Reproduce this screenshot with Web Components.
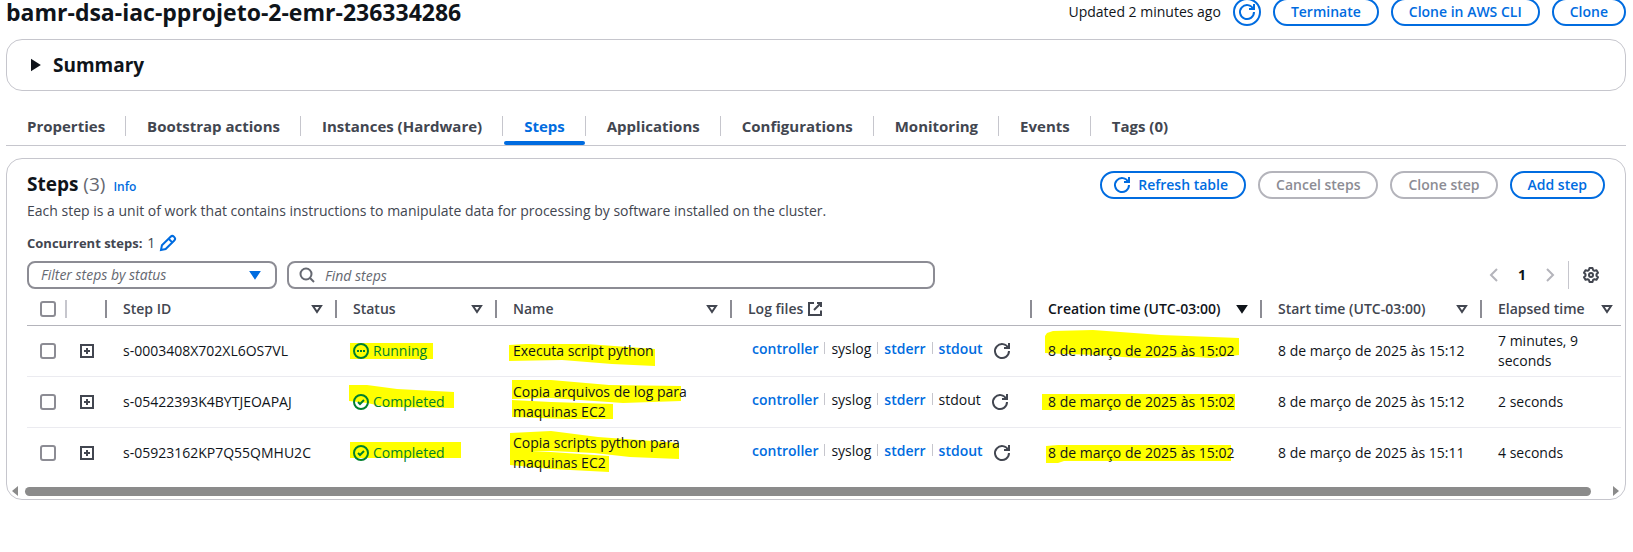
<!DOCTYPE html>
<html lang="en">
<head>
<meta charset="utf-8">
<title>EMR cluster steps</title>
<style>
  body { margin: 0; background: #fff; color: #0f141a; font: 14px/20px "Open Sans", "Noto Sans", sans-serif; }
</style>
</head>
<body>
<cluster-page></cluster-page>

<script>
const ICONS = {
  refresh: '<path d="M10 5h5V0"/><path d="M15 8a7 7 0 1 1-.7-3"/>',
  edit: '<path d="m1 15 .93-4.65 8.65-8.66a2.35 2.35 0 0 1 3.32 0l.41.41a2.36 2.36 0 0 1 0 3.33l-8.66 8.65z"/><path d="m8.6 3.7 3.7 3.7"/>',
  search: '<circle cx="7" cy="7" r="5.5"/><path d="m15 15-4-4"/>',
  caret: '<path d="M4 5h8l-4 6z"/>',
  'caret-filled': '<path d="M4 5h8l-4 6z" fill="currentColor"/>',
  'caret-right': '<path d="M5 3.5v9L12 8z" fill="currentColor"/>',
  previous: '<path d="m11 2-6 6 6 6"/>',
  next: '<path d="m5 2 6 6-6 6"/>',
  external: '<path d="M10 2h4v4"/><path d="m7 9 7-7"/><path d="M14 9.5V14H2V2h5"/>',
  expand: '<path d="M2 2h12v12H2z"/><path d="M8 5v6M5 8h6"/>',
  running: '<circle cx="8" cy="8" r="7"/><path d="M4 8h2M7 8h2M10 8h2"/>',
  completed: '<circle cx="8" cy="8" r="7"/><path d="m5 8 2 2 4-4"/>',
  settings: '<path stroke-linejoin="round" d="M6.500 1h3l.6 2.100 1.300.700 2.100-.600 1.500 2.600-1.500 1.500v1.400l1.500 1.500-1.500 2.600-2.100-.600-1.300.700-.600 2.100h-3l-.600-2.100-1.300-.700-2.100.600L1 10.200l1.500-1.500V7.300L1 5.800l1.500-2.600 2.100.600 1.300-.700z"/><circle cx="8" cy="8" r="2"/>'
};

function define(name, css, html) {
  const template = document.createElement('template');
  template.innerHTML = `<style>*{box-sizing:border-box}${css}</style>${html || ''}`;
  customElements.define(name, class extends HTMLElement {
    constructor() {
      super();
      this.attachShadow({ mode: 'open' }).append(template.content.cloneNode(true));
    }
  });
}

customElements.define('ui-icon', class extends HTMLElement {
  connectedCallback() {
    if (this.shadowRoot) return;
    this.attachShadow({ mode: 'open' }).innerHTML = `
      <style>
        :host { display: inline-block; width: 16px; height: 16px; flex: none; }
        svg { display: block; width: 100%; height: 100%; overflow: visible; fill: none; stroke: currentColor; stroke-width: 2; }
      </style>
      <svg viewBox="0 0 16 16" aria-hidden="true">${ICONS[this.getAttribute('name')]}</svg>`;
  }
});

/* Highlighter stroke painted behind a table cell's text. */
customElements.define('marker-stroke', class extends HTMLElement {
  connectedCallback() {
    if (this.shadowRoot) return;
    this.attachShadow({ mode: 'open' }).innerHTML = `
      <style>
        :host { display: block; position: absolute; inset: 0; }
        svg { display: block; width: 100%; height: 100%; overflow: visible; fill: #ff0; }
      </style>
      <svg aria-hidden="true">${this.getAttribute('shapes').split('|').map(p => `<polygon points="${p}"/>`).join('')}</svg>`;
  }
});

customElements.define('ui-button', class extends HTMLElement {
  connectedCallback() {
    if (this.shadowRoot) return;
    const icon = this.getAttribute('icon');
    const off = this.hasAttribute('disabled') ? 'disabled' : '';
    const round = this.hasAttribute('round');
    this.attachShadow({ mode: 'open' }).innerHTML = `
      <style>
        :host { display: block; flex: none; }
        button { display: flex; align-items: center; justify-content: center; gap: 8px; box-sizing: border-box; height: 28px; margin: 0; padding: 0 ${icon ? '16px 0 12px' : '16px'}; border: 2px solid #006ce0; border-radius: 14px; background: #fff; color: #006ce0; font: 600 14px/20px "Open Sans", sans-serif; white-space: nowrap; }
        button:disabled { border-color: #b4b4bb; color: #8c8c94; }
        button.round { width: 28px; padding: 0; }
      </style>
      <button type="button" class="${round ? 'round' : ''}" ${round ? 'aria-label="Refresh"' : ''} ${off}>${icon ? `<ui-icon name="${icon}"></ui-icon>` : ''}<slot></slot></button>`;
    if (round) this.shadowRoot.querySelector('slot').remove();
  }
});

define('page-header', `
  :host { display: flex; justify-content: space-between; height: 28px; margin-top: -2px; }
  h1 { margin: 0; font-size: 23px; line-height: 28px; font-weight: 700; white-space: nowrap; }
  div { display: flex; align-items: center; gap: 12px; }
`, `
  <h1>bamr-dsa-iac-pprojeto-2-emr-236334286</h1>
  <div>
    <span>Updated 2 minutes ago</span>
    <ui-button icon="refresh" round></ui-button>
    <ui-button>Terminate</ui-button>
    <ui-button>Clone in AWS CLI</ui-button>
    <ui-button>Clone</ui-button>
  </div>`);

define('summary-panel', `
  :host { display: block; margin-top: 13px; border: 1px solid #c6c6cd; border-radius: 16px; }
  button { display: flex; align-items: center; gap: 10px; width: 100%; padding: 12px 20px; border: 0; background: none; color: inherit; font: 700 19px/26px "Open Sans", sans-serif; }
`, `<button type="button" aria-expanded="false"><ui-icon name="caret-right"></ui-icon>Summary</button>`);

define('cluster-tabs', `
  :host { display: block; margin-top: 20px; border-bottom: 1px solid #c6c6cd; }
  ul { display: flex; margin: 0; padding: 0 0 0 1px; list-style: none; }
  li { display: flex; align-items: flex-start; height: 34px; }
  li + li::before { content: ""; width: 1px; height: 20px; margin: 5px 1px 0 0; background: #c6c6cd; }
  a { height: 34px; padding: 5px 20px 0; color: #424650; font-size: 15px; font-weight: 700; text-decoration: none; white-space: nowrap; }
  a[aria-current] { color: #006ce0; position: relative; }
  a[aria-current]::after { content: ""; position: absolute; inset: auto 0 0; height: 4px; border-radius: 2px; background: #006ce0; }
`, `
  <nav><ul>
    <li><a href="#properties">Properties</a></li>
    <li><a href="#bootstrap">Bootstrap actions</a></li>
    <li><a href="#instances">Instances (Hardware)</a></li>
    <li><a href="#steps" aria-current="page">Steps</a></li>
    <li><a href="#applications">Applications</a></li>
    <li><a href="#configurations">Configurations</a></li>
    <li><a href="#monitoring">Monitoring</a></li>
    <li><a href="#events">Events</a></li>
    <li><a href="#tags">Tags (0)</a></li>
  </ul></nav>`);

define('steps-header', `
  :host { display: block; padding: 12px 20px 0; }
  .top { display: flex; justify-content: space-between; }
  .title { display: flex; align-items: baseline; gap: 8px; height: 28px; }
  h2 { margin: 0; font-size: 19px; line-height: 26px; font-weight: 700; }
  h2 span { color: #656871; font-weight: 400; }
  a { color: #006ce0; font-size: 12px; font-weight: 600; text-decoration: none; }
  .actions { display: flex; gap: 12px; }
  p { margin: 0; padding-top: 2px; color: #424650; }
  .concurrent { display: flex; align-items: center; gap: 5px; padding-top: 12px; color: #424650; }
  b { font-size: 13px; font-weight: 700; }
  .concurrent button { display: flex; margin: 0; padding: 0; border: 0; background: none; color: #006ce0; }
`, `
  <div class="top">
    <div class="title"><h2>Steps <span>(3)</span></h2><a href="#info">Info</a></div>
    <div class="actions">
      <ui-button icon="refresh">Refresh table</ui-button>
      <ui-button disabled>Cancel steps</ui-button>
      <ui-button disabled>Clone step</ui-button>
      <ui-button>Add step</ui-button>
    </div>
  </div>
  <p>Each step is a unit of work that contains instructions to manipulate data for processing by software installed on the cluster.</p>
  <div class="concurrent"><b>Concurrent steps:</b><span>1</span><button type="button" aria-label="Edit concurrent steps"><ui-icon name="edit"></ui-icon></button></div>`);

define('steps-filter', `
  :host { display: flex; align-items: center; gap: 10px; padding: 8px 20px 0; color: #424650; }
  .field { position: relative; flex: 0 1 250px; height: 28px; }
  .search { flex-basis: 648px; }
  select, input { width: 100%; height: 28px; margin: 0; border: 2px solid #8c8c94; border-radius: 8px; background: #fff; color: #656871; font: italic 14px/20px "Open Sans", sans-serif; }
  select { appearance: none; padding: 0 12px; }
  input { padding: 0 12px 0 36px; }
  input::placeholder { color: #656871; opacity: 1; }
  .field ui-icon { position: absolute; top: 6px; pointer-events: none; }
  .field .caret { right: 14px; color: #006ce0; }
  .field .glass { left: 12px; color: #656871; }
  .pages { display: flex; align-items: center; gap: 16px; margin-left: auto; }
  button { display: flex; margin: 0; padding: 0; border: 0; background: none; color: #424650; font: inherit; }
  button:disabled { color: #b4b4bb; }
  .pages b { color: #0f141a; }
  .gear { padding: 6px 6px 6px 14px; border-left: 1px solid #c6c6cd; }
`, `
  <div class="field"><select aria-label="Filter steps by status"><option>Filter steps by status</option></select><ui-icon class="caret" name="caret-filled"></ui-icon></div>
  <div class="field search"><ui-icon class="glass" name="search"></ui-icon><input type="search" placeholder="Find steps" aria-label="Find steps"></div>
  <div class="pages">
    <button type="button" disabled aria-label="Previous page"><ui-icon name="previous"></ui-icon></button>
    <b>1</b>
    <button type="button" disabled aria-label="Next page"><ui-icon name="next"></ui-icon></button>
  </div>
  <button class="gear" type="button" aria-label="Preferences"><ui-icon name="settings"></ui-icon></button>`);

const HEADS = ['Step ID', 'Status', 'Name', 'Log files', 'Creation time (UTC-03:00)', 'Start time (UTC-03:00)', 'Elapsed time'];
const STEPS = [
  {
    id: 's-0003408X702XL6OS7VL', status: 'Running', name: 'Executa script python', stdout: true,
    created: '8 de março de 2025 às 15:02', started: '8 de março de 2025 às 15:12', elapsed: '7 minutes, 9 seconds',
    marks: {
      status: '13,17 96,17 96,33 13,33',
      name: '12,19 29,18 90,18 158,23 158,40 115,38 65,34 12,35',
      created: '13,10 15,7 21,5 61,4 129,9 207,12 207,29 179,32 163,31 109,32 90,31 67,29 32,28 13,27'
    }
  },
  {
    id: 's-05422393K4BYTJEOAPAJ', status: 'Completed', name: 'Copia arquivos de log para maquinas EC2', stdout: false,
    created: '8 de março de 2025 às 15:02', started: '8 de março de 2025 às 15:12', elapsed: '2 seconds',
    marks: {
      status: '12,8 30,8 60,12 117,15 117,31 49,30 30,26 12,24',
      name: '15,3 54,3 112,8 184,9 184,24 126,26 54,21 15,22|15,23 54,25 116,27 116,42 69,42 15,40',
      created: '10,17 203,17 203,33 10,33'
    }
  },
  {
    id: 's-05923162KP7Q55QMHU2C', status: 'Completed', name: 'Copia scripts python para maquinas EC2', stdout: true,
    created: '8 de março de 2025 às 15:02', started: '8 de março de 2025 às 15:11', elapsed: '4 seconds',
    marks: {
      status: '13,14 124,14 124,30 13,30',
      name: '13,5 54,3 101,9 182,15 182,31 133,29 97,25 54,23 13,25|13,24 54,24 112,28 112,44 54,41 13,37',
      created: '14,18 26,17 199,17 199,33 32,33 26,35 14,35'
    }
  }
];

customElements.define('steps-table', class extends HTMLElement {
  connectedCallback() {
    if (this.shadowRoot) return;
    const head = HEADS.map((label, i) => label === 'Log files'
      ? `<th scope="col"><span>${label} <ui-icon name="external"></ui-icon></span></th>`
      : `<th scope="col" class="${i === 4 ? 'sorted' : ''}"><button type="button">${label}<ui-icon name="${i === 4 ? 'caret-filled' : 'caret'}"></ui-icon></button></th>`).join('');
    const marked = (shapes, html, cls) => `<td><marker-stroke shapes="${shapes}"></marker-stroke><div class="text ${cls || ''}">${html}</div></td>`;
    const rows = STEPS.map(s => `
      <tr>
        <td class="check"><input type="checkbox" aria-label="Select ${s.id}"></td>
        <td class="toggle"><button type="button" aria-label="Expand ${s.id}"><ui-icon name="expand"></ui-icon></button></td>
        <td>${s.id}</td>
        ${marked(s.marks.status, `<ui-icon name="${s.status.toLowerCase()}"></ui-icon>${s.status}`, 'status')}
        ${marked(s.marks.name, s.name)}
        <td class="logs"><div>
          <a href="#controller">controller</a><i></i><span>syslog</span><i></i><a href="#stderr">stderr</a><i></i>${s.stdout ? '<a href="#stdout">stdout</a>' : '<span>stdout</span>'}
          <button type="button" aria-label="Refresh logs"><ui-icon name="refresh"></ui-icon></button>
        </div></td>
        ${marked(s.marks.created, s.created)}
        <td>${s.started}</td>
        <td>${s.elapsed}</td>
      </tr>`).join('');
    this.attachShadow({ mode: 'open' }).innerHTML = `
      <style>
        * { box-sizing: border-box; }
        :host { display: block; margin-top: 4px; padding: 0 4px 0 20px; overflow: hidden; }
        table { width: 100%; table-layout: fixed; border-collapse: separate; border-spacing: 0; }
        .c-icon { width: 40px; } .c-time { width: 230px; } .c-start { width: 220px; } .c-status { width: 160px; } .c-name { width: 235px; } .c-logs { width: 300px; }
        th { position: relative; height: 33px; padding: 0 14px 1px 16px; border-bottom: 1px solid #b4b4bb; color: #424650; font-weight: 600; text-align: left; white-space: nowrap; }
        th:not(:last-child)::after { content: ""; position: absolute; right: 0; top: 7px; width: 2px; height: 18px; background: #8c8c94; }
        th:first-child::after { background: #c6c6cd; }
        th:last-child { padding-right: 8px; }
        th.check { padding: 0 0 1px 13px; }
        th.sorted { color: #0f141a; }
        th span { display: flex; align-items: center; gap: 4px; }
        button { margin: 0; padding: 0; border: 0; background: none; color: inherit; font: inherit; }
        th button { display: flex; align-items: center; justify-content: space-between; width: 100%; }
        th button ui-icon { margin-right: -2px; }
        td { position: relative; height: 51px; padding: 5px 16px; border-bottom: 1px solid #ebebf0; }
        tr:last-child td { border-bottom-color: transparent; }
        td.check { padding: 0 0 0 13px; }
        td.toggle { padding: 0 0 0 12px; color: #424650; }
        td.toggle button, td.toggle ui-icon, td.check input, th.check input { display: block; }
        .text { position: relative; }
        .status { display: flex; align-items: center; gap: 4px; color: #00802f; }
        .logs div { display: flex; align-items: flex-start; padding: 2px 0 0 4px; height: 28px; }
        .logs a { color: #006ce0; font-weight: 600; text-decoration: none; }
        .logs i { width: 1px; height: 12px; margin: 3px 6px 0; background: #c6c6cd; }
        .logs button { margin: 4px 0 0 11px; color: #424650; }
        .logs ui-icon { display: block; }
        input { appearance: none; width: 16px; height: 16px; margin: 0; border: 2px solid #8c8c94; border-radius: 3px; background: #fff; }
      </style>
      <table>
        <colgroup><col class="c-icon"><col class="c-icon"><col class="c-time"><col class="c-status"><col class="c-name"><col class="c-logs"><col class="c-time"><col class="c-start"><col></colgroup>
        <thead><tr><th class="check"><input type="checkbox" aria-label="Select all steps"></th><th></th>${head}</tr></thead>
        <tbody>${rows}</tbody>
      </table>`;
  }
});

define('scroll-track', `
  :host { display: flex; align-items: center; justify-content: space-between; gap: 7px; height: 16px; margin-top: 4px; padding: 0 6px 0 5px; }
  .left, .right { border: 5px solid transparent; border-width: 5px 0; }
  .left { border-right: 6px solid #8b8b8b; }
  .right { border-left: 6px solid #8b8b8b; }
  .thumb { flex: 1; height: 9px; margin-right: 15px; border-radius: 5px; background: #8b8b8b; }
`, `<div class="left"></div><div class="thumb"></div><div class="right"></div>`);

define('steps-panel', `
  :host { display: block; margin-top: 12px; border: 1px solid #c6c6cd; border-radius: 16px; overflow: hidden; }
`, `<steps-header></steps-header><steps-filter></steps-filter><steps-table></steps-table><scroll-track></scroll-track>`);

define('cluster-page', `
  :host { display: block; padding: 0 7px 0 6px; }
  main { display: flow-root; }
`, `<main><page-header></page-header><summary-panel></summary-panel><cluster-tabs></cluster-tabs><steps-panel></steps-panel></main>`);
</script>
</body>
</html>
